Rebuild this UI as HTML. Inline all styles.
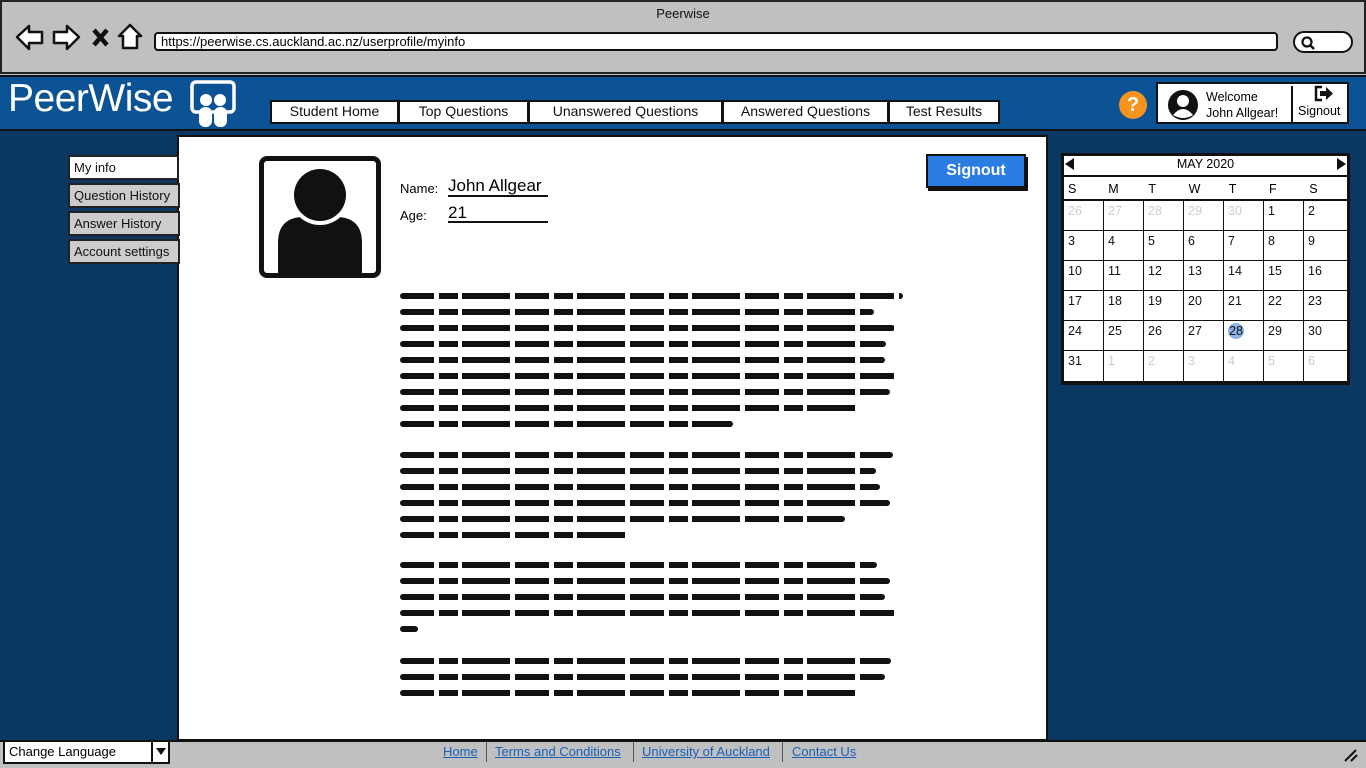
<!DOCTYPE html>
<html><head><meta charset="utf-8">
<style>
*{box-sizing:border-box;margin:0;padding:0}
body{width:1366px;height:768px;overflow:hidden;font-family:"Liberation Sans",sans-serif;background:#c0c0c0;position:relative}
.abs{position:absolute}
#chrome{left:0;top:0;width:1366px;height:74px;background:#c0c0c0;border:2px solid #222}
#title{left:0;top:6px;width:1366px;text-align:center;font-size:13px;color:#111}
#url{left:154px;top:32px;width:1124px;height:19px;background:#fff;border:2px solid #111;border-radius:4px;font-size:13px;padding-left:5px;line-height:15px}
#search{left:1293px;top:31px;width:60px;height:22px;border:2px solid #111;border-radius:11px;background:#fff}
#hdr{left:0;top:75px;width:1366px;height:56px;background:#0b5394;border-top:2px solid #111;border-bottom:2px solid #111}
#main{left:0;top:131px;width:1366px;height:609px;background:#0a3863}
#logo{left:8px;top:77px;color:#fff;font-size:39px;letter-spacing:-0.5px}
.nav{top:100px;height:24px;background:#fff;border:2px solid #111;font-size:14px;text-align:center;line-height:19px;color:#111}
#welcome{left:1156px;top:82px;width:193px;height:42px;background:#fff;border:2px solid #111;font-size:12.5px}
#help{left:1119px;top:91px;width:28px;height:28px;border-radius:50%;background:#f7941d;color:#fff;font-weight:bold;font-size:20px;text-align:center;line-height:28px}
#content{left:177px;top:135px;width:871px;height:606px;background:#fff;border:2px solid #111}
.side{left:68px;width:112px;height:25px;background:#ccc;border:2px solid #222;font-size:13px;padding-left:4px;line-height:21px;color:#111}
#avatar{left:259px;top:156px;width:122px;height:122px;border:5px solid #111;border-radius:8px;background:#fff;overflow:hidden}
#sig{left:926px;top:154px;width:100px;height:34px;background:#2b7de1;border:2px solid #111;box-shadow:2px 3px 0 #111;color:#fff;font-weight:bold;font-size:16px;text-align:center;line-height:30px}
.s{position:absolute;left:400px;height:6px;border-radius:3px;background:repeating-linear-gradient(90deg,#111 0 34px,transparent 34px 39px,#111 39px 58px,transparent 58px 62px,#111 62px 110px,transparent 110px 115px)}
#cal{left:1061px;top:153px;width:289px;height:232px;background:#111;border:2px solid #111}
#footer{left:0;top:740px;width:1366px;height:28px;background:#c0c0c0;border-top:2px solid #111}
.fl{top:744px;font-size:13px;color:#1a5fb4;text-decoration:underline}
.sep{top:742px;width:1px;height:20px;background:#555}
</style></head><body>
<div id="chrome" class="abs"></div>
<div id="title" class="abs">Peerwise</div>
<svg class="abs" style="left:14px;top:22px" width="132" height="32" viewBox="0 0 132 32">
<path d="M3 15 L15 4 L15 10 L28 10 L28 21 L15 21 L15 27 Z" fill="#fff" stroke="#111" stroke-width="2.5" stroke-linejoin="round"/>
<path d="M65 15 L53 4 L53 10 L40 10 L40 21 L53 21 L53 27 Z" fill="#fff" stroke="#111" stroke-width="2.5" stroke-linejoin="round"/>
<path d="M80 8 L93 23 M93 8 L80 23" stroke="#111" stroke-width="4.5"/>
<path d="M116 3 L105 14 L109 14 L109 26 L123 26 L123 14 L127 14 Z" fill="#fff" stroke="#111" stroke-width="2.5" stroke-linejoin="round"/>
</svg>
<div id="url" class="abs">https://peerwise.cs.auckland.ac.nz/userprofile/myinfo</div>
<div id="search" class="abs"><svg width="20" height="18" style="margin:2px 0 0 5px"><circle cx="7" cy="7" r="4.5" fill="none" stroke="#111" stroke-width="2.2"/><path d="M10 10 L14 14" stroke="#111" stroke-width="2.5"/></svg></div>

<div id="hdr" class="abs"></div>
<div id="main" class="abs"></div>
<div id="logo" class="abs">PeerWise</div>
<svg class="abs" style="left:189px;top:80px" width="48" height="50" viewBox="0 0 48 50">
<rect x="3" y="2" width="42" height="30" rx="4" fill="none" stroke="#fff" stroke-width="3.5"/>
<circle cx="17" cy="20" r="6" fill="#fff"/><circle cx="31" cy="20" r="6" fill="#fff"/>
<rect x="10" y="27" width="13" height="20" rx="6" fill="#fff"/><rect x="25" y="27" width="13" height="20" rx="6" fill="#fff"/>
</svg>
<div class="abs nav" style="left:270px;width:129px">Student Home</div>
<div class="abs nav" style="left:398px;width:131px">Top Questions</div>
<div class="abs nav" style="left:528px;width:195px">Unanswered Questions</div>
<div class="abs nav" style="left:722px;width:167px">Answered Questions</div>
<div class="abs nav" style="left:888px;width:112px">Test Results</div>
<div id="help" class="abs">?</div>
<div id="welcome" class="abs">
<svg class="abs" style="left:8px;top:4px" width="34" height="34"><circle cx="17" cy="17" r="15" fill="#111"/><circle cx="17" cy="13" r="6" fill="#fff"/><path d="M7 27 Q17 15 27 27 Q17 33 7 27Z" fill="#fff"/></svg>
<div class="abs" style="left:48px;top:5px;line-height:16px">Welcome<br>John Allgear!</div>
<div class="abs" style="left:133px;top:2px;width:2px;height:36px;background:#111"></div>
<svg class="abs" style="left:155px;top:1px" width="22" height="18"><path d="M9 2 H3 V15 H9" fill="none" stroke="#111" stroke-width="2.5"/><path d="M7 6 H13 V2 L20 8.5 L13 15 V11 H7Z" fill="#111"/></svg>
<div class="abs" style="left:140px;top:20px">Signout</div>
</div>

<div id="content" class="abs"></div>
<div class="abs side" style="top:155px;background:#fff;width:111px">My info</div>
<div class="abs side" style="top:183px">Question History</div>
<div class="abs side" style="top:211px">Answer History</div>
<div class="abs side" style="top:239px">Account settings</div>

<div id="avatar" class="abs"><svg width="112" height="112"><path d="M14 112 L14 82 Q14 56 40 56 L72 56 Q98 56 98 82 L98 112Z" fill="#111"/><circle cx="56" cy="34" r="30" fill="#fff"/><circle cx="56" cy="34" r="26" fill="#111"/></svg></div>
<div class="abs" style="left:400px;top:181px;font-size:13px">Name:</div>
<div class="abs" style="left:448px;top:177px;font-size:17px;border-bottom:2px solid #111;width:100px;line-height:18px">John Allgear</div>
<div class="abs" style="left:400px;top:208px;font-size:13px">Age:</div>
<div class="abs" style="left:448px;top:204px;font-size:17px;border-bottom:2px solid #111;width:100px;line-height:17px">21</div>
<div id="sig" class="abs">Signout</div>

<div class="s" style="top:293px;width:503px"></div>
<div class="s" style="top:309px;width:474px"></div>
<div class="s" style="top:325px;width:495px"></div>
<div class="s" style="top:341px;width:486px"></div>
<div class="s" style="top:357px;width:485px"></div>
<div class="s" style="top:373px;width:497px"></div>
<div class="s" style="top:389px;width:490px"></div>
<div class="s" style="top:405px;width:458px"></div>
<div class="s" style="top:421px;width:333px"></div>
<div class="s" style="top:452px;width:493px"></div>
<div class="s" style="top:468px;width:476px"></div>
<div class="s" style="top:484px;width:480px"></div>
<div class="s" style="top:500px;width:490px"></div>
<div class="s" style="top:516px;width:445px"></div>
<div class="s" style="top:532px;width:230px"></div>
<div class="s" style="top:562px;width:477px"></div>
<div class="s" style="top:578px;width:490px"></div>
<div class="s" style="top:594px;width:485px"></div>
<div class="s" style="top:610px;width:498px"></div>
<div class="s" style="top:626px;width:18px"></div>
<div class="s" style="top:658px;width:491px"></div>
<div class="s" style="top:674px;width:485px"></div>
<div class="s" style="top:690px;width:460px"></div>

<div id="cal" class="abs"></div>
<div class="abs" style="left:1064px;top:156px;width:283px;height:19px;background:#fff;font-size:12.5px;text-align:center;line-height:17px">MAY 2020</div>
<div class="abs" style="left:1065px;top:158px;width:0;height:0;border-top:6px solid transparent;border-bottom:6px solid transparent;border-right:9px solid #111"></div>
<div class="abs" style="left:1337px;top:158px;width:0;height:0;border-top:6px solid transparent;border-bottom:6px solid transparent;border-left:9px solid #111"></div>
<div class="abs" style="left:1064px;top:177px;width:283px;height:22px;background:#fff;font-size:12.5px"></div>
<div id="cg"></div>
<script>
var d=["S","M","T","W","T","F","S"],h="";
for(var i=0;i<7;i++)h+='<div class="abs" style="left:'+(1068+i*40.2)+'px;top:182px;font-size:12.5px">'+d[i]+'</div>';
var n=[];for(i=0;i<5;i++)n.push([26,27,28,29,30][i]);for(i=1;i<=31;i++)n.push(i);for(i=1;i<=6;i++)n.push(i);
for(var k=0;k<42;k++){var r=Math.floor(k/7),c=k%7;var g=(k<5||k>35);var x=1064+c*40,y=201+r*30,w=(c==6?43:39);
h+='<div class="abs" style="left:'+x+'px;top:'+y+'px;width:'+w+'px;height:'+(r==5?30:29)+'px;background:#fff;font-size:12.5px;padding:3px 0 0 4px;color:'+(g?'#ccc':'#111')+'">'+(n[k]==28&&!g?'<span style="background:#8db4ea;border-radius:50%;padding:1px 1px">28</span>':n[k])+'</div>';}
document.getElementById("cg").innerHTML=h;
</script>

<div id="footer" class="abs"></div>
<div class="abs" style="left:3px;top:740px;width:167px;height:24px;background:#fff;border:2px solid #111;font-size:13px;padding-left:4px;line-height:20px">Change Language</div>
<div class="abs" style="left:151px;top:740px;width:2px;height:24px;background:#111"></div>
<div class="abs" style="left:156px;top:748px;border-left:5px solid transparent;border-right:5px solid transparent;border-top:7px solid #111"></div>
<div class="abs fl" style="left:443px">Home</div>
<div class="abs sep" style="left:486px"></div>
<div class="abs fl" style="left:495px">Terms and Conditions</div>
<div class="abs sep" style="left:633px"></div>
<div class="abs fl" style="left:642px">University of Auckland</div>
<div class="abs sep" style="left:782px"></div>
<div class="abs fl" style="left:792px">Contact Us</div>
<svg class="abs" style="left:1343px;top:748px" width="16" height="14"><path d="M2 13 L13 2 M8 13 L14 7" stroke="#111" stroke-width="2"/></svg>
</body></html>
